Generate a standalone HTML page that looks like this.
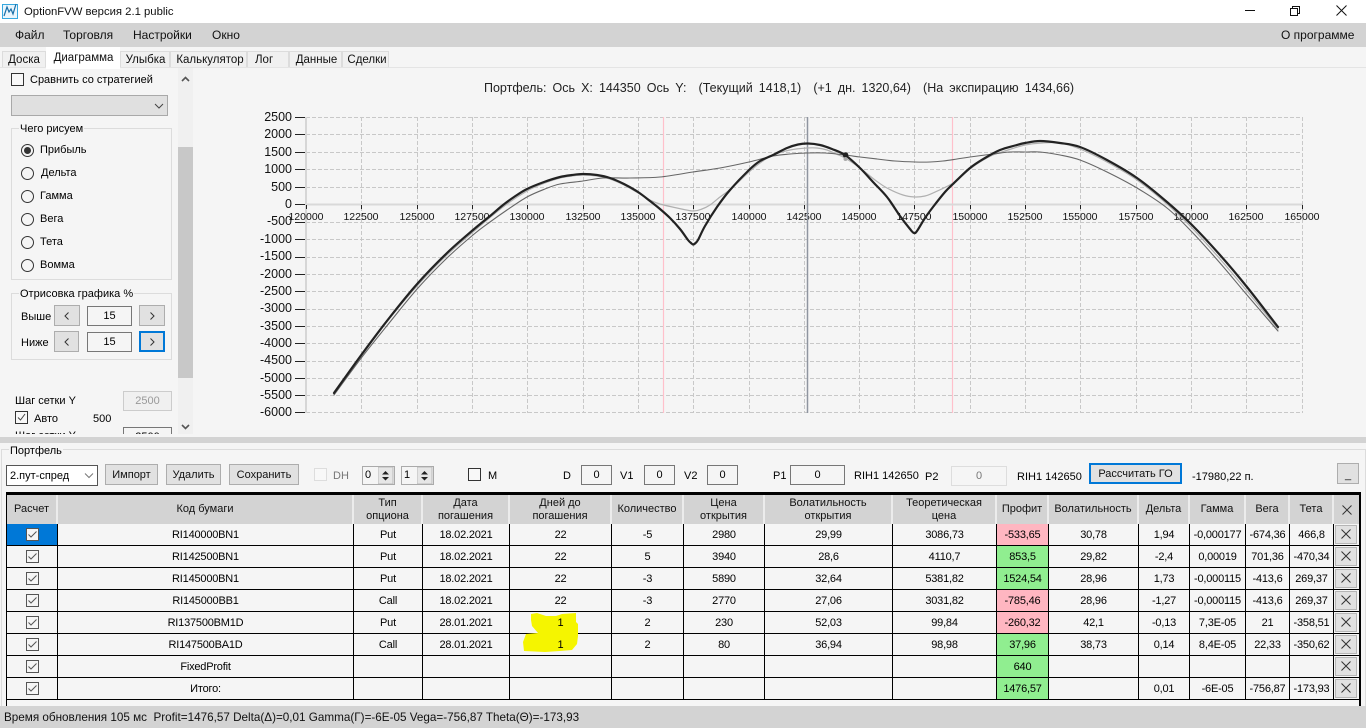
<!DOCTYPE html>
<html lang="ru"><head><meta charset="utf-8"><title>OptionFVW</title>
<style>
*{box-sizing:border-box}
html,body{margin:0;padding:0;width:1366px;height:728px;overflow:hidden;background:#f5f5f5;font:11px "Liberation Sans",sans-serif;color:#000}
.a{position:absolute}
.t{position:absolute;white-space:nowrap;line-height:14px}
.m{font-size:12px;top:28px;color:#111}
.tab{position:absolute;top:51px;height:17px;background:#f0f0f0;border:1px solid #dcdcdc;border-bottom:0;text-align:center;font-size:11.5px;line-height:17px;color:#111}
.btn{position:absolute;background:#e1e1e1;border:1px solid #adadad;text-align:center;font-size:11px;color:#111}
.btn svg{display:block;margin:6px auto 0}
.inp{position:absolute;background:#f5f5f5;border:1px solid #777;text-align:center;font-size:11px;line-height:18px}
.g{position:absolute;border:1px solid #dcdcdc}
.g span{position:absolute;top:-6px;left:7px;background:#f5f5f5;padding:0 1px;line-height:13px;font-size:11px;white-space:nowrap}
.r{position:absolute;left:21px;width:13px;height:13px;border:1px solid #333;border-radius:50%;background:#f5f5f5}
.cb{position:absolute;width:13px;height:13px;border:1px solid #333;background:#f8f8f8}
table{border-collapse:separate;border-spacing:0;table-layout:fixed;position:absolute;left:7px;top:495px;width:1352px}
td,th{padding:0;text-align:center;font-weight:400;font-size:11px;line-height:13px;overflow:hidden;white-space:nowrap}
th{height:29px;background:#d3d3d3;border-right:2px solid #ececec;color:#111;white-space:normal}
td{height:22px;border-right:1px solid #000;border-bottom:1px solid #000;background:#f5f5f5;padding-top:2px;letter-spacing:-.2px}
td:first-child{padding-top:0}
td:last-child{padding-top:0;border-right:0;vertical-align:top}
td svg,th svg{display:block;margin:auto}
.p{background:#ffb6c1}.v{background:#90ee90}
.b{position:relative;z-index:3}
.x{display:block;width:22px;height:19px;margin:1px 0 0 1px;background:#e1e1e1;border:1px solid #b5b5b5;padding-top:3px}
</style></head><body>

<!-- title bar -->
<div class="a" style="left:0;top:0;width:1366px;height:23px;background:#fff"></div>
<svg class="a" style="left:2px;top:3px" width="17" height="16" viewBox="0 0 17 16"><rect x=".5" y="1.5" width="15" height="14" fill="#eaf6fd" stroke="#35a8e0"/><path d="M2 13 5 4 7 9 9 6 11 11 14 1" fill="none" stroke="#1a6fa8" stroke-width="1.2"/></svg>
<div class="t" style="left:24px;top:5px;font-size:11.3px;color:#111">OptionFVW версия 2.1 public</div>
<svg class="a" style="left:1240px;top:0" width="120" height="22" fill="none" stroke="#111"><path d="M5 10.500H15"/><path d="M50.500 8.500h7v7h-7zM52.500 8.500v-2h7v7h-2"/><path d="M96.500 5.500 106.500 15.500M106.500 5.500 96.500 15.500"/></svg>

<!-- menu -->
<div class="a" style="left:0;top:23px;width:1366px;height:24px;background:#d3d3d3"></div>
<div class="t m" style="left:15px">Файл</div>
<div class="t m" style="left:63px">Торговля</div>
<div class="t m" style="left:133px">Настройки</div>
<div class="t m" style="left:212px">Окно</div>
<div class="t m" style="left:1281px">О программе</div>

<!-- tabs -->
<div class="a" style="left:0;top:47px;width:1366px;height:21px;background:#f5f5f5"></div>
<div class="tab" style="left:2px;width:44px">Доска</div>
<div class="tab" style="left:46px;top:47px;height:22px;width:74px;background:#fff;border-color:#fff;line-height:20px;padding-left:1px;z-index:2">Диаграмма</div>
<div class="tab" style="left:120px;width:50px;padding-left:1px">Улыбка</div>
<div class="tab" style="left:170px;width:77px;padding-left:3px">Калькулятор</div>
<div class="tab" style="left:247px;width:42px;text-align:left;padding-left:7px">Лог</div>
<div class="tab" style="left:289px;width:53px;padding-left:2px">Данные</div>
<div class="tab" style="left:342px;width:47px;padding-left:3px">Сделки</div>
<div class="a" style="left:0;top:67px;width:1366px;height:1px;background:#e4e4e4"></div>

<!-- left panel -->
<div class="a" style="left:0;top:68px;width:193px;height:366px;overflow:hidden">
  <div class="cb" style="left:11px;top:5px"></div>
  <div class="t" style="left:30px;top:5px;font-size:11px">Сравнить со стратегией</div>
  <div class="a" style="left:11px;top:27px;width:157px;height:21px;background:#e0e0e0;border:1px solid #a9a9a9"></div>
  <svg class="a" style="left:153px;top:34px" width="12" height="8" fill="none" stroke="#444"><path d="M2 2 6 6 10 2"/></svg>

  <div class="g" style="left:11px;top:60px;width:161px;height:152px"><span>Чего рисуем</span></div>
  <div class="r" style="top:76px"><div class="a" style="left:2px;top:2px;width:7px;height:7px;border-radius:50%;background:#333"></div></div>
  <div class="t" style="left:40px;top:75px">Прибыль</div>
  <div class="r" style="top:99px"></div><div class="t" style="left:41px;top:98px">Дельта</div>
  <div class="r" style="top:122px"></div><div class="t" style="left:40px;top:121px">Гамма</div>
  <div class="r" style="top:145px"></div><div class="t" style="left:40px;top:144px">Вега</div>
  <div class="r" style="top:168px"></div><div class="t" style="left:40px;top:167px">Тета</div>
  <div class="r" style="top:191px"></div><div class="t" style="left:40px;top:190px">Вомма</div>

  <div class="g" style="left:11px;top:225px;width:161px;height:67px"><span>Отрисовка графика %</span></div>
  <div class="t" style="left:21px;top:242px">Выше</div>
  <div class="btn" style="left:54px;top:237px;width:26px;height:21px"><svg width="6" height="8" fill="none" stroke="#333"><path d="M4.500 .5 1 4 4.500 7.500"/></svg></div>
  <div class="inp" style="left:87px;top:238px;width:45px;height:20px">15</div>
  <div class="btn" style="left:139px;top:237px;width:26px;height:21px"><svg width="6" height="8" fill="none" stroke="#333"><path d="M1.500 .5 5 4 1.500 7.500"/></svg></div>
  <div class="t" style="left:21px;top:268px">Ниже</div>
  <div class="btn" style="left:54px;top:263px;width:25px;height:21px"><svg width="6" height="8" fill="none" stroke="#333"><path d="M4.500 .5 1 4 4.500 7.500"/></svg></div>
  <div class="inp" style="left:87px;top:264px;width:45px;height:20px">15</div>
  <div class="btn" style="left:139px;top:263px;width:26px;height:21px;border:2px solid #0078d7"><svg width="6" height="8" fill="none" stroke="#333" style="margin-top:5px"><path d="M1.500 .5 5 4 1.500 7.500"/></svg></div>

  <div class="t" style="left:15px;top:326px">Шаг сетки Y</div>
  <div class="inp" style="left:123px;top:323px;width:49px;height:20px;background:#f0f0f0;border-color:#ccc;color:#999">2500</div>
  <div class="cb" style="left:15px;top:343px"><svg width="11" height="11" fill="none" stroke="#444"><path d="M2 5.500 4.500 8 9 2"/></svg></div>
  <div class="t" style="left:34px;top:344px">Авто</div>
  <div class="t" style="left:93px;top:344px">500</div>
  <div class="t" style="left:15px;top:361px">Шаг сетки Y</div>
  <div class="inp" style="left:123px;top:359px;width:49px;height:20px">2500</div>
</div>
<!-- left scrollbar -->
<div class="a" style="left:178px;top:68px;width:15px;height:366px;background:#f0f0f0"></div>
<div class="a" style="left:178px;top:147px;width:15px;height:231px;background:#c8c8c8"></div>
<svg class="a" style="left:180px;top:75px" width="11" height="8" fill="none" stroke="#555" stroke-width="1.600"><path d="M2 6 5.500 2.500 9 6"/></svg>
<svg class="a" style="left:180px;top:423px" width="11" height="8" fill="none" stroke="#555" stroke-width="1.600"><path d="M2 2 5.500 5.500 9 2"/></svg>

<!-- chart -->
<div class="t" style="left:484px;top:81px;font-size:12.5px;word-spacing:2.600px;color:#222">Портфель: Ось X: 144350 Ось Y:&nbsp; (Текущий 1418,1)&nbsp; (+1 дн. 1320,64)&nbsp; (На экспирацию 1434,66)</div>
<svg class="a" id="ch" style="left:0;top:0" width="1366" height="440" font-family="Liberation Sans, sans-serif">
 <g stroke="#c8c8c8" stroke-dasharray="4 2" fill="none">
  <path d="M306 117.500H1302M306 134.500H1302M306 152.500H1302M306 169.500H1302M306 187.500H1302M306 222.500H1302M306 239.500H1302M306 257.500H1302M306 274.500H1302M306 291.500H1302M306 309.500H1302M306 326.500H1302M306 343.500H1302M306 361.500H1302M306 378.500H1302M306 395.500H1302M306 412.500H1302"/>
  <path d="M361.500 117V413M417.500 117V413M472.500 117V413M527.500 117V413M583.500 117V413M638.500 117V413M693.500 117V413M749.500 117V413M804.500 117V413M859.500 117V413M914.500 117V413M970.500 117V413M1025.500 117V413M1080.500 117V413M1136.500 117V413M1191.500 117V413M1246.500 117V413M1302.500 117V413"/>
 </g>
 <path d="M663.500 117V413M952.500 117V413" stroke="#ffc0cb" stroke-width="1.200"/>
 <path d="M306 117V413" stroke="#d6d6d6" stroke-width="2"/>
 <path d="M306 204.500H1302" stroke="#d9d9d9" stroke-width="2"/>
 <path d="M295 117.500h10M295 134.500h10M295 152.500h10M295 169.500h10M295 187.500h10M295 204.500h10M295 222.500h10M295 239.500h10M295 257.500h10M295 274.500h10M295 291.500h10M295 309.500h10M295 326.500h10M295 343.500h10M295 361.500h10M295 378.500h10M295 395.500h10M295 412.500h10" stroke="#222"/>
 <path d="M306.500 205v4M361.500 205v4M417.500 205v4M472.500 205v4M527.500 205v4M583.500 205v4M638.500 205v4M693.500 205v4M749.500 205v4M804.500 205v4M859.500 205v4M914.500 205v4M970.500 205v4M1025.500 205v4M1080.500 205v4M1136.500 205v4M1191.500 205v4M1246.500 205v4M1302.500 205v4" stroke="#222"/>
 <g font-size="12.500" text-anchor="end" fill="#111" transform="translate(0,-1)">
  <text x="292" y="122">2500</text><text x="292" y="139">2000</text><text x="292" y="157">1500</text><text x="292" y="174">1000</text><text x="292" y="192">500</text><text x="292" y="209">0</text>
  <text x="292" y="226">-500</text><text x="292" y="244">-1000</text><text x="292" y="261">-1500</text><text x="292" y="279">-2000</text><text x="292" y="296">-2500</text><text x="292" y="313">-3000</text><text x="292" y="331">-3500</text><text x="292" y="348">-4000</text><text x="292" y="365">-4500</text><text x="292" y="383">-5000</text><text x="292" y="400">-5500</text><text x="292" y="417">-6000</text>
 </g>
 <g font-size="10.500" text-anchor="middle" fill="#111">
  <text x="306" y="220">120000</text><text x="361" y="220">122500</text><text x="417" y="220">125000</text><text x="472" y="220">127500</text><text x="527" y="220">130000</text><text x="583" y="220">132500</text><text x="638" y="220">135000</text><text x="693" y="220">137500</text><text x="749" y="220">140000</text><text x="804" y="220">142500</text><text x="859" y="220">145000</text><text x="914" y="220">147500</text><text x="970" y="220">150000</text><text x="1025" y="220">152500</text><text x="1080" y="220">155000</text><text x="1136" y="220">157500</text><text x="1191" y="220">160000</text><text x="1246" y="220">162500</text><text x="1302" y="220">165000</text>
 </g>
 <path d="M807.500 117V413" stroke="#8f95a0" stroke-width="1.500"/>
 <g fill="none" stroke-linejoin="round" stroke-linecap="round">
  <polyline stroke="#b0b0b0" stroke-width="1.200" points="334,394 362,355 390,318 418,285 447,255 473,232 503,207 527,191 545,183 560,178 572,176 583,175 597,176 610,179 624,185 638,193 650,200 660,204 677,208 693,211 702,209 710,205 720,197 732,188 749,172 760,163 773,155 790,150 807,148 817,148 827,150 836,154 845,158 860,168 875,180 887,188 903,195 915,197 925,196 933,193 953,183 970,169 980,162 993,155 1008,150 1025,145 1042,143 1060,143 1080,149 1107,162 1137,180 1167,204 1192,228 1220,259 1247,291 1278,329"/>
  <polyline stroke="#666" stroke-width="1.100" points="334,395 362,357 390,322 418,288 447,258 473,235 490,222 507,210 527,197 545,189 560,184 583,181 603,178 630,178 660,177 693,172 720,168 749,162 773,156 790,154 807,153 825,153 845,155 860,157 877,159 895,161 915,162 930,162 943,161 957,159 970,157 993,154 1010,152 1025,152 1040,152 1060,155 1080,160 1107,172 1137,188 1167,208 1192,232 1220,263 1247,295 1278,331"/>
  <polyline stroke="#222" stroke-width="2.200" points="334,393 362,354 390,317 418,283 447,253 473,230 490,216 503,205 514,197 527,189 544,182 560,177 572,175 583,174 597,175 610,178 624,184 638,192 650,201 660,209 670,218 680,229 688,240 691,243 693,244.500 695,243.500 698,240 705,226 717,207 730,190 749,170 760,161 773,155 787,148 798,144.500 808,143.500 820,145 832,149 845,155 860,168 873,182 887,197 900,216 910,229 914,233 917,231 925,218 933,207 945,192 953,184 970,168 985,158 1000,150 1015,145.500 1025,143 1040,141 1060,143 1080,147 1107,160 1137,178 1167,202 1192,225 1220,255 1247,287 1278,327"/>
 </g>
 <circle cx="845.500" cy="155" r="2.800" fill="#222"/>
 <circle cx="845.500" cy="159" r="2" fill="#aaa"/>
</svg>
<script>
document.querySelectorAll('#ch polyline').forEach(function(l){
  var p=l.getAttribute('points').trim().split(/\s+/).map(function(s){return s.split(',').map(Number)});
  var d='M'+p[0][0]+' '+p[0][1];
  for(var i=0;i<p.length-1;i++){
    var a=p[Math.max(i-1,0)],b=p[i],c=p[i+1],e=p[Math.min(i+2,p.length-1)];
    d+='C'+(b[0]+(c[0]-a[0])/6).toFixed(2)+' '+(b[1]+(c[1]-a[1])/6).toFixed(2)+' '+(c[0]-(e[0]-b[0])/6).toFixed(2)+' '+(c[1]-(e[1]-b[1])/6).toFixed(2)+' '+c[0]+' '+c[1];
  }
  var n=document.createElementNS('http://www.w3.org/2000/svg','path');
  n.setAttribute('d',d);n.setAttribute('stroke',l.getAttribute('stroke'));n.setAttribute('stroke-width',l.getAttribute('stroke-width'));
  l.parentNode.replaceChild(n,l);
});
</script>

<!-- splitter -->
<div class="a" style="left:0;top:437px;width:1366px;height:6px;background:#d3d3d3"></div>

<!-- portfolio -->
<div class="a" style="left:1px;top:449px;width:1364px;height:1px;background:#dcdcdc"></div>
<div class="a" style="left:1px;top:449px;width:1px;height:257px;background:#dcdcdc"></div>
<div class="a" style="left:1365px;top:449px;width:1px;height:257px;background:#dcdcdc"></div>
<div class="t" style="left:9px;top:444px;background:#f5f5f5;padding:0 1px">Портфель</div>

<div class="a" style="left:6px;top:465px;width:92px;height:21px;background:#fff;border:1px solid #555;line-height:20px;padding-left:3px">2.пут-спред</div>
<svg class="a" style="left:84px;top:472px" width="10" height="7" fill="none" stroke="#777"><path d="M1 1.500 5 5.500 9 1.500"/></svg>
<div class="btn" style="left:105px;top:464px;width:53px;height:21px;line-height:21px">Импорт</div>
<div class="btn" style="left:166px;top:464px;width:55px;height:21px;line-height:21px">Удалить</div>
<div class="btn" style="left:229px;top:464px;width:70px;height:21px;line-height:21px">Сохранить</div>
<div class="cb" style="left:314px;top:468px;border-color:#ddd;background:#f8f8f8"></div>
<div class="t" style="left:333px;top:469px;color:#777">DH</div>
<div class="a" style="left:362px;top:466px;width:33px;height:19px;border:1px solid #aaa;padding-left:2px;line-height:16px">0</div>
<svg class="a" style="left:378px;top:467px" width="16" height="17"><rect width="15" height="17" fill="#e6e6e6" stroke="#bbb"/><path d="M7.500 4 11 7.500H4zM7.500 13.500 11 10H4z" fill="#222"/></svg>
<div class="a" style="left:401px;top:466px;width:33px;height:19px;border:1px solid #aaa;padding-left:2px;line-height:16px">1</div>
<svg class="a" style="left:417px;top:467px" width="16" height="17"><rect width="15" height="17" fill="#e6e6e6" stroke="#bbb"/><path d="M7.500 4 11 7.500H4zM7.500 13.500 11 10H4z" fill="#222"/></svg>
<div class="cb" style="left:468px;top:468px"></div>
<div class="t" style="left:488px;top:469px">M</div>
<div class="t" style="left:563px;top:469px">D</div>
<div class="inp" style="left:581px;top:465px;width:31px;height:20px">0</div>
<div class="t" style="left:620px;top:469px">V1</div>
<div class="inp" style="left:644px;top:465px;width:31px;height:20px">0</div>
<div class="t" style="left:684px;top:469px">V2</div>
<div class="inp" style="left:707px;top:465px;width:31px;height:20px">0</div>
<div class="t" style="left:773px;top:469px">P1</div>
<div class="inp" style="left:790px;top:465px;width:55px;height:20px">0</div>
<div class="t" style="left:854px;top:469px">RIH1 142650</div>
<div class="t" style="left:925px;top:470px">P2</div>
<div class="inp" style="left:951px;top:466px;width:56px;height:20px;border-color:#ddd;color:#777">0</div>
<div class="t" style="left:1017px;top:470px">RIH1 142650</div>
<div class="btn" style="left:1089px;top:463px;width:93px;height:21px;border:2px solid #0078d7;line-height:18px;background:#e1e1e1">Рассчитать ГО</div>
<div class="t" style="left:1192px;top:470px">-17980,22 п.</div>
<div class="btn" style="left:1337px;top:463px;width:22px;height:21px;line-height:22px">_</div>

<!-- table frame -->
<div class="a" style="left:6px;top:492px;width:1354px;height:3px;background:#000"></div>
<div class="a" style="left:6px;top:492px;width:1px;height:214px;background:#000"></div>
<div class="a" style="left:1359px;top:492px;width:2px;height:214px;background:#000"></div>

<table>
<colgroup><col style="width:51px"><col style="width:296px"><col style="width:69px"><col style="width:87px"><col style="width:102px"><col style="width:72px"><col style="width:81px"><col style="width:128px"><col style="width:104px"><col style="width:52px"><col style="width:90px"><col style="width:51px"><col style="width:56px"><col style="width:44px"><col style="width:44px"><col style="width:25px"></colgroup>
<tr><th>Расчет</th><th>Код бумаги</th><th>Тип<br>опциона</th><th>Дата<br>погашения</th><th>Дней до<br>погашения</th><th>Количество</th><th>Цена<br>открытия</th><th>Волатильность<br>открытия</th><th>Теоретическая<br>цена</th><th>Профит</th><th>Волатильность</th><th>Дельта</th><th>Гамма</th><th>Вега</th><th>Тета</th><th style="border-right:0"><svg width="10" height="10" fill="none" stroke="#333"><path d="M.5.500 9.500 9.500M9.500.500 .5 9.500"/></svg></th></tr>
<tr><td style="background:#0078d7"><svg width="13" height="13" fill="#f5f5f5" stroke="#555"><rect x=".5" y=".5" width="12" height="12"/><path fill="none" d="M2.500 6.500 5 9 10.500 3.500"/></svg></td><td>RI140000BN1</td><td>Put</td><td>18.02.2021</td><td>22</td><td>-5</td><td>2980</td><td>29,99</td><td>3086,73</td><td class="p">-533,65</td><td>30,78</td><td>1,94</td><td>-0,000177</td><td>-674,36</td><td>466,8</td><td><span class="x"><svg width="10" height="10" fill="none" stroke="#333"><path d="M.5.500 9.500 9.500M9.500.500 .5 9.500"/></svg></span></td></tr>
<tr><td><svg width="13" height="13" fill="#f5f5f5" stroke="#555"><rect x=".5" y=".5" width="12" height="12"/><path fill="none" d="M2.500 6.500 5 9 10.500 3.500"/></svg></td><td>RI142500BN1</td><td>Put</td><td>18.02.2021</td><td>22</td><td>5</td><td>3940</td><td>28,6</td><td>4110,7</td><td class="v">853,5</td><td>29,82</td><td>-2,4</td><td>0,00019</td><td>701,36</td><td>-470,34</td><td><span class="x"><svg width="10" height="10" fill="none" stroke="#333"><path d="M.5.500 9.500 9.500M9.500.500 .5 9.500"/></svg></span></td></tr>
<tr><td><svg width="13" height="13" fill="#f5f5f5" stroke="#555"><rect x=".5" y=".5" width="12" height="12"/><path fill="none" d="M2.500 6.500 5 9 10.500 3.500"/></svg></td><td>RI145000BN1</td><td>Put</td><td>18.02.2021</td><td>22</td><td>-3</td><td>5890</td><td>32,64</td><td>5381,82</td><td class="v">1524,54</td><td>28,96</td><td>1,73</td><td>-0,000115</td><td>-413,6</td><td>269,37</td><td><span class="x"><svg width="10" height="10" fill="none" stroke="#333"><path d="M.5.500 9.500 9.500M9.500.500 .5 9.500"/></svg></span></td></tr>
<tr><td><svg width="13" height="13" fill="#f5f5f5" stroke="#555"><rect x=".5" y=".5" width="12" height="12"/><path fill="none" d="M2.500 6.500 5 9 10.500 3.500"/></svg></td><td>RI145000BB1</td><td>Call</td><td>18.02.2021</td><td>22</td><td>-3</td><td>2770</td><td>27,06</td><td>3031,82</td><td class="p">-785,46</td><td>28,96</td><td>-1,27</td><td>-0,000115</td><td>-413,6</td><td>269,37</td><td><span class="x"><svg width="10" height="10" fill="none" stroke="#333"><path d="M.5.500 9.500 9.500M9.500.500 .5 9.500"/></svg></span></td></tr>
<tr><td><svg width="13" height="13" fill="#f5f5f5" stroke="#555"><rect x=".5" y=".5" width="12" height="12"/><path fill="none" d="M2.500 6.500 5 9 10.500 3.500"/></svg></td><td>RI137500BM1D</td><td>Put</td><td>28.01.2021</td><td><span class="b">1</span></td><td>2</td><td>230</td><td>52,03</td><td>99,84</td><td class="p">-260,32</td><td>42,1</td><td>-0,13</td><td>7,3E-05</td><td>21</td><td>-358,51</td><td><span class="x"><svg width="10" height="10" fill="none" stroke="#333"><path d="M.5.500 9.500 9.500M9.500.500 .5 9.500"/></svg></span></td></tr>
<tr><td><svg width="13" height="13" fill="#f5f5f5" stroke="#555"><rect x=".5" y=".5" width="12" height="12"/><path fill="none" d="M2.500 6.500 5 9 10.500 3.500"/></svg></td><td>RI147500BA1D</td><td>Call</td><td>28.01.2021</td><td><span class="b">1</span></td><td>2</td><td>80</td><td>36,94</td><td>98,98</td><td class="v">37,96</td><td>38,73</td><td>0,14</td><td>8,4E-05</td><td>22,33</td><td>-350,62</td><td><span class="x"><svg width="10" height="10" fill="none" stroke="#333"><path d="M.5.500 9.500 9.500M9.500.500 .5 9.500"/></svg></span></td></tr>
<tr><td><svg width="13" height="13" fill="#f5f5f5" stroke="#555"><rect x=".5" y=".5" width="12" height="12"/><path fill="none" d="M2.500 6.500 5 9 10.500 3.500"/></svg></td><td>FixedProfit</td><td></td><td></td><td></td><td></td><td></td><td></td><td></td><td class="v">640</td><td></td><td></td><td></td><td></td><td></td><td><span class="x"><svg width="10" height="10" fill="none" stroke="#333"><path d="M.5.500 9.500 9.500M9.500.500 .5 9.500"/></svg></span></td></tr>
<tr><td><svg width="13" height="13" fill="#f5f5f5" stroke="#555"><rect x=".5" y=".5" width="12" height="12"/><path fill="none" d="M2.500 6.500 5 9 10.500 3.500"/></svg></td><td>Итого:</td><td></td><td></td><td></td><td></td><td></td><td></td><td></td><td class="v">1476,57</td><td></td><td>0,01</td><td>-6E-05</td><td>-756,87</td><td>-173,93</td><td><span class="x"><svg width="10" height="10" fill="none" stroke="#333"><path d="M.5.500 9.500 9.500M9.500.500 .5 9.500"/></svg></span></td></tr>
</table>

<!-- yellow highlight -->
<svg class="a" style="left:0;top:0;z-index:2" width="1366" height="728"><path d="M531 614 537 613 546 616 556 616 562 614 576 613 576 622 578 624 578 636 577 644 572 650 560 651 545 652 524 651 523 642 526 634 538 633 532 626 531 620Z" fill="#f5f500"/></svg>

<!-- status bar -->
<div class="a" style="left:0;top:706px;width:1366px;height:22px;background:#d3d3d3"></div>
<div class="t" style="left:4px;top:711px;font-size:11.700px;color:#111">Время обновления 105 мс&nbsp; Profit=1476,57 Delta(Δ)=0,01 Gamma(Γ)=-6E-05 Vega=-756,87 Theta(Θ)=-173,93</div>
</body></html>
